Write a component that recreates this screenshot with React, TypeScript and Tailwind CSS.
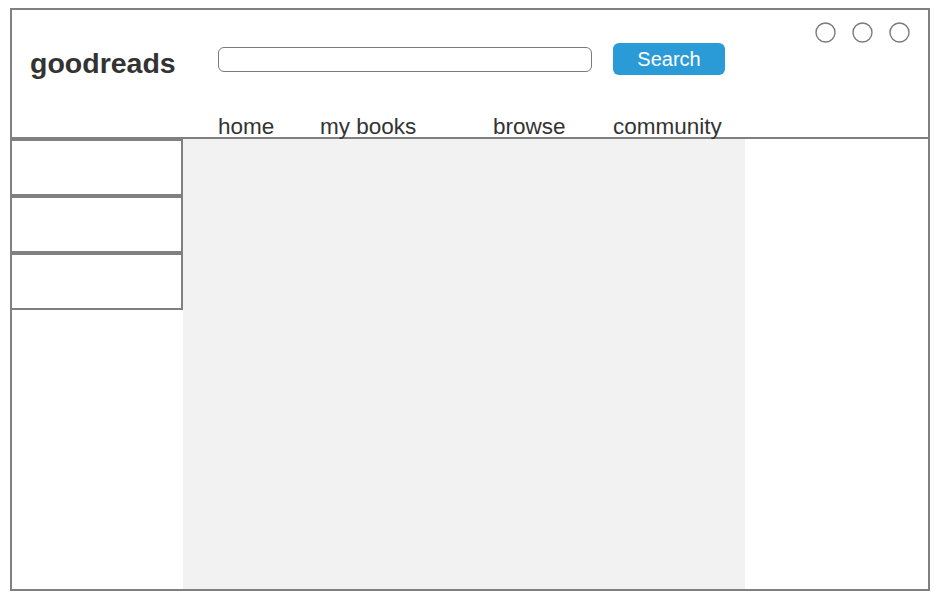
const navItems = [
  { label: 'home', width: 'w-[102px]' },
  { label: 'my books', width: 'w-[173px]' },
  { label: 'browse', width: 'w-[120px]' },
  { label: 'community', width: '' },
]

function WindowDots() {
  return (
    <div className="ml-auto flex gap-[16px] pt-[12px] pr-[18px]">
      {[0, 1, 2].map((i) => (
        <svg key={i} width="21" height="21" viewBox="0 0 21 21">
          <circle cx="10.5" cy="10.5" r="9.5" fill="none" stroke="#7a7a7a" strokeWidth="1.4" />
        </svg>
      ))}
    </div>
  )
}

export default function App() {
  return (
    <div className="bg-white pt-[8px] pl-[10px]" style={{ fontFamily: '"Liberation Sans", Arial, sans-serif' }}>
      <div className="w-[920px] h-[583px] border-2 border-[#808080] flex flex-col">
        <header className="h-[129px] shrink-0 border-b-2 border-[#808080] flex">
          <div className="w-[206px] pl-[18px] pt-[37px]">
            <span className="text-[28.5px] leading-[32px] font-bold text-[#333333]">goodreads</span>
          </div>
          <div className="flex flex-col">
            <div className="flex items-center gap-[21px] mt-[33px] h-[32px]">
              <div className="w-[374px] h-[25px] rounded-[6px] border-[1.5px] border-[#7a7a7a] bg-white" />
              <button className="w-[112px] h-[32px] rounded-[6px] bg-[#2a9bd7] text-white text-[20px] leading-[32px]">
                Search
              </button>
            </div>
            <nav className="flex mt-[40px]">
              {navItems.map((item) => (
                <span key={item.label} className={`${item.width} text-[22.5px] leading-[24px] text-[#333333] whitespace-nowrap`}>
                  {item.label}
                </span>
              ))}
            </nav>
          </div>
          <WindowDots />
        </header>
        <div className="flex flex-1">
          <aside className="w-[171px] shrink-0 flex flex-col">
            {[0, 1, 2].map((i) => (
              <div key={i} className="h-[57px] border-y-2 border-r-2 border-[#808080] bg-white" />
            ))}
          </aside>
          <main className="w-[562px] bg-[#f2f2f2]" />
          <div className="flex-1 bg-white" />
        </div>
      </div>
    </div>
  )
}
